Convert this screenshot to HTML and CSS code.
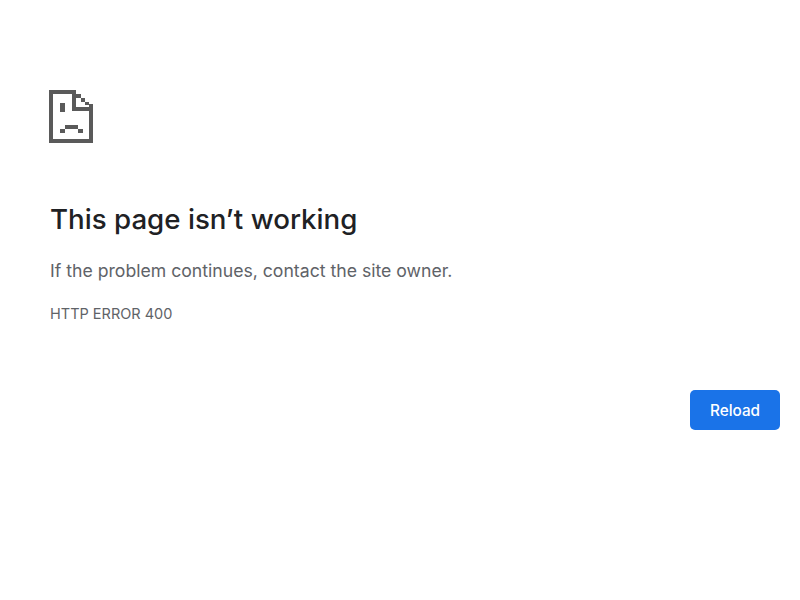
FILE: index.html
```html
<!DOCTYPE html>
<html lang="en">
<head>
    <meta charset="UTF-8">
    <title>This page isn't working</title>
    <link rel="stylesheet" href="styles.css">
</head>
<body>
    <div class="error-container">
        <svg class="sad-icon" width="44" height="53" viewBox="0 0 44 53" fill="#5a5a5a">
            <path d="M0 0H27V4H4V49H40V14H44V53H0Z"/>
            <path d="M23 0H27V17H44V21H23Z"/>
            <rect x="27" y="4" width="5" height="4"/>
            <rect x="32" y="8" width="4" height="4"/>
            <rect x="36" y="12" width="4" height="3"/>
            <rect x="11" y="13" width="5" height="9"/>
            <rect x="16" y="35" width="13" height="4"/>
            <rect x="11" y="39" width="5" height="4"/>
            <rect x="29" y="39" width="5" height="4"/>
        </svg>
        <h1>This page isn&rsquo;t working</h1>
        <p class="message">If the problem continues, contact the site owner.</p>
        <p class="error-code">HTTP ERROR 400</p>
        <div class="actions">
            <button class="reload-btn" type="button">Reload</button>
        </div>
    </div>
</body>
</html>
```

FILE: styles.css
```css
html, body {
    margin: 0;
    padding: 0;
    background-color: #fff;
}
body {
    font-family: Inter, "Liberation Sans", sans-serif;
}
.error-container {
    padding: 90px 20px 0 50px;
}
.sad-icon {
    display: block;
    margin-left: -1px;
}
h1 {
    margin: 57px 0 0;
    font-size: 27.7px;
    line-height: 38px;
    font-weight: 500;
    color: #202124;
}
.message {
    margin: 21px 0 0;
    font-size: 17.65px;
    line-height: 24px;
    color: #5f6368;
}
.error-code {
    margin: 21px 0 0;
    font-size: 14.5px;
    line-height: 20px;
    color: #5f6368;
}
.actions {
    display: flex;
    justify-content: flex-end;
    margin-top: 66px;
}
.reload-btn {
    width: 90px;
    height: 40px;
    background-color: #1a73e8;
    color: white;
    font-family: inherit;
    font-size: 15.3px;
    font-weight: 500;
    border: none;
    border-radius: 5px;
}
```
